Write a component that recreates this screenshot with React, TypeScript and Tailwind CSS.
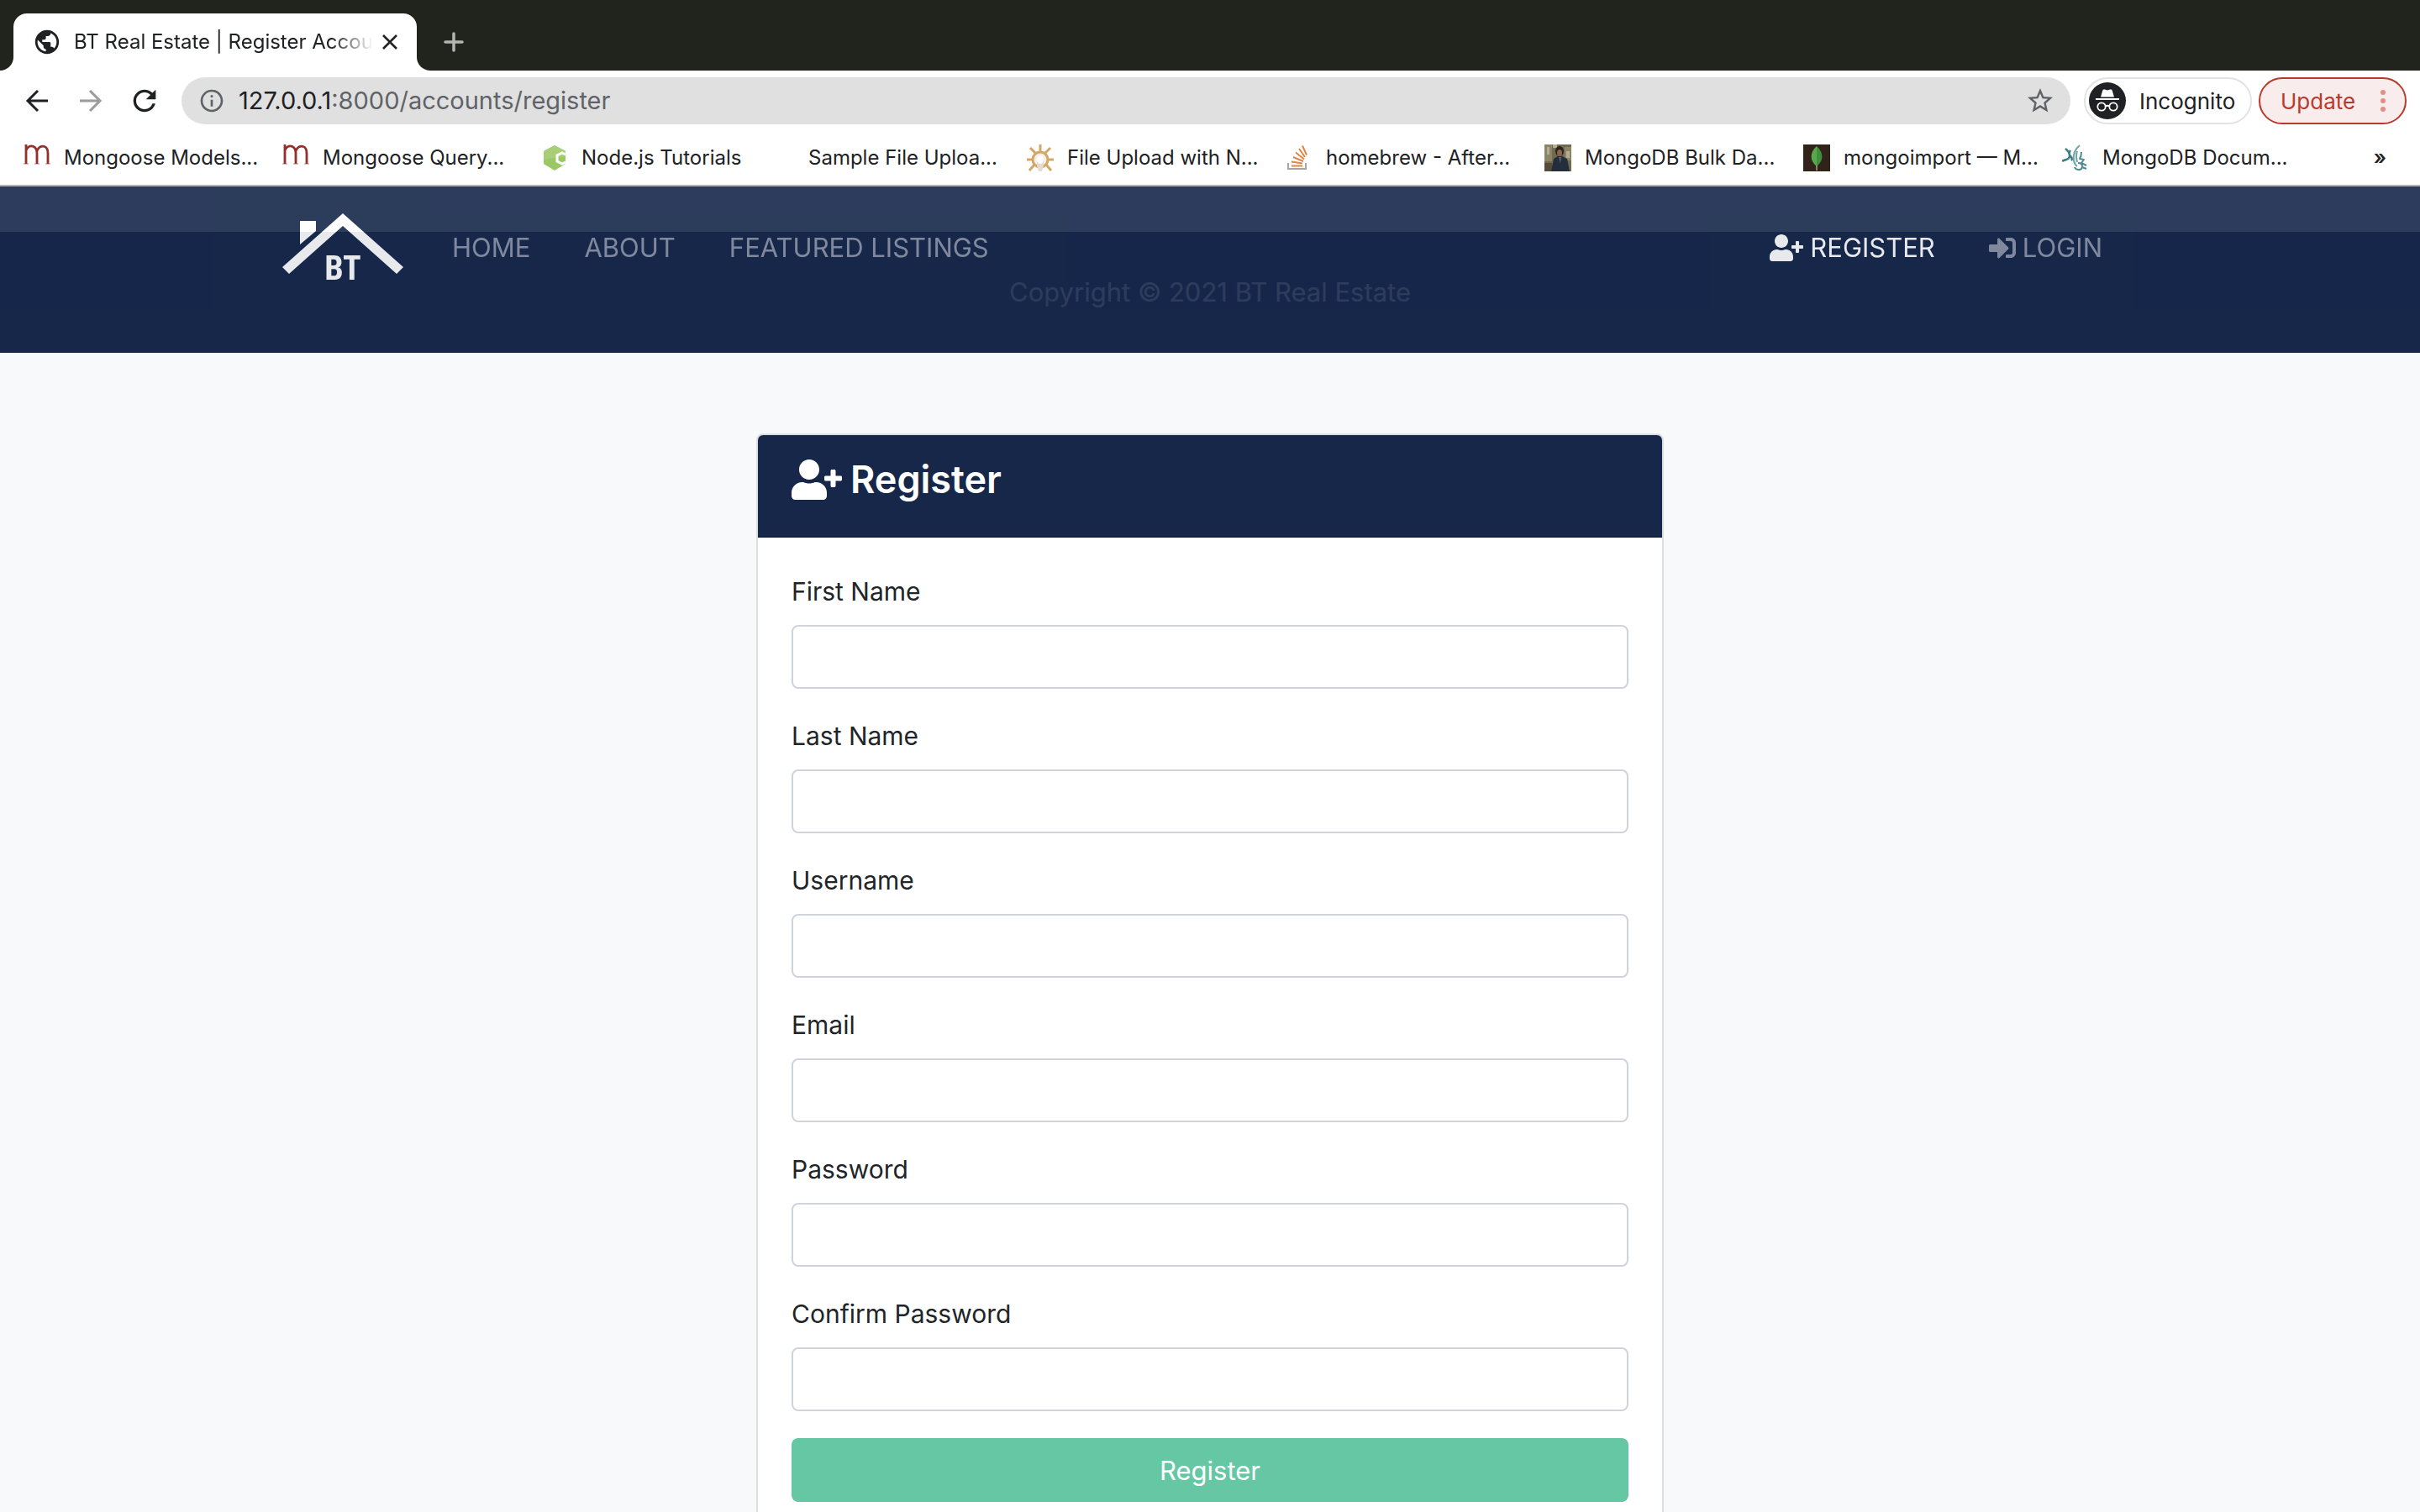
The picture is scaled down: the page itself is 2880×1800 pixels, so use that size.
import React from "react";
import { FaUserPlus, FaSignInAlt } from "react-icons/fa";
import { MdRefresh, MdStarBorder, MdInfoOutline, MdPublic } from "react-icons/md";

function MongooseIcon() {
  return (
    <svg viewBox="0 0 32 32" className="h-8 w-8" fill="none" stroke="#93302b" strokeWidth="2.8">
      <path d="M3 0v23M3 7c2-5 6-6 9-4.500 3 1.500 4 4 4 8v12.500M16 8c1-4 5-7 9-5.500 3 1 4 4 4 8v12.500" />
      <path d="M0 23h6M13 23h6M26 23h6" strokeWidth="1" opacity=".6" />
    </svg>
  );
}

function NodeIcon() {
  return (
    <svg viewBox="0 0 32 32" className="h-8 w-8">
      <path d="M16 1L29 8v15L16 31 3 23V8z" fill="#9bc765" />
      <path d="M16 1L29 8v6L3 18V8z" fill="#a8cf78" />
      <path d="M29 12l-4-2-6 3v7l6 3 4-2" fill="none" stroke="#fff" strokeWidth="3" />
    </svg>
  );
}

function BulbIcon() {
  return (
    <svg viewBox="0 0 32 32" className="h-8 w-8" fill="none">
      <path
        d="M16 0v8M0 18h7M25 18h7M4 4l6 6M28 4l-6 6M3 31l6-7M29 31l-6-7"
        stroke="#d3a768"
        strokeWidth="3"
      />
      <circle cx="16" cy="18" r="9" fill="#f4efe8" stroke="#d3a768" strokeWidth="3" />
      <path d="M12 17h8v8l-2 7h-4l-2-7z" fill="#e2dcd2" />
      <ellipse cx="16" cy="18" rx="4" ry="5" fill="#fff" />
    </svg>
  );
}

function StackIcon() {
  return (
    <svg viewBox="0 0 32 32" className="h-8 w-8" fill="none">
      <path d="M3 22v7h21v-7" stroke="#a5a5a8" strokeWidth="2" />
      <path
        d="M7 25.500h13M7 20.500l13 2M9 15l12 5M12 9.500l10 8M16 5l7 10M20 1.500l5 11"
        stroke="#e58442"
        strokeWidth="2"
      />
    </svg>
  );
}

function PhotoIcon() {
  return (
    <svg viewBox="0 0 32 32" className="h-8 w-8">
      <rect width="32" height="32" fill="#6f6a50" />
      <path d="M0 0h9v20H0zM24 3h8v16h-8z" fill="#8b8467" />
      <path d="M3 3h3v9H3zM26 8h4v8h-4zM10 0h5v4h-5z" fill="#b3ad93" />
      <path d="M0 22h9v10H0z" fill="#564a38" />
      <ellipse cx="18" cy="8" rx="5" ry="6" fill="#2c221c" />
      <ellipse cx="18" cy="10" rx="3" ry="4" fill="#8c6450" />
      <path d="M11 17l5-3h5l6 3 3 15H8z" fill="#242d3b" />
      <path d="M17 15h3l-1 8z" fill="#59626f" />
    </svg>
  );
}

function LeafIcon() {
  return (
    <svg viewBox="0 0 32 32" className="h-8 w-8">
      <rect width="32" height="32" fill="#32231a" />
      <path d="M16 2c-9 8-8 18 0 24z" fill="#58a84d" />
      <path d="M16 2c9 8 8 18 0 24z" fill="#3f8f3c" />
      <path d="M16 25v6" stroke="#a9a08f" strokeWidth="1.500" />
    </svg>
  );
}

function AntlerIcon() {
  return (
    <svg viewBox="0 0 32 32" className="h-8 w-8" fill="none" strokeLinejoin="round">
      <path d="M4 5q5 4 5 8t-4 5-5 2M10 7q-3 4 0 7t1 5" stroke="#3f7d85" strokeWidth="2.500" />
      <path d="M21 1c-6 5-8 12-7 18q1 5 4 7M18 8q-2 6 0 13" stroke="#6fa3a9" strokeWidth="2" />
      <path d="M23 9q0 5-2 8l5 1-3 4 6 3M19 22q5 0 5 4t-4 4-5-3M24 27l5 2" stroke="#4f8a91" strokeWidth="2" />
    </svg>
  );
}

function IncognitoIcon() {
  return (
    <svg viewBox="0 0 44 44" className="h-11 w-11 shrink-0">
      <circle cx="22" cy="22" r="22" fill="#202124" />
      <path d="M17.500 8.500h1.500l3 1 3-1h1.500q1 0 1.300 1.500l2.200 7.500H14l2.200-7.500q.3-1.500 1.300-1.500z" fill="#fff" />
      <rect x="8" y="19" width="28" height="2" fill="#fff" />
      <g fill="none" stroke="#fff" strokeWidth="1.800">
        <circle cx="15" cy="29" r="4.700" />
        <circle cx="29" cy="29" r="4.700" />
        <path d="M19.700 28.500q2.300-1.500 4.600 0" />
      </g>
    </svg>
  );
}

function Logo() {
  return (
    <svg viewBox="0 0 144 96" className="h-24 w-36" fill="#fff" role="img" aria-label="BT">
      <path d="M72 0L144 64l-8 8L72 15 8 72 0 64z" />
      <path d="M21 9h19v12L21 37z" />
      <text
        x="72"
        y="79"
        textAnchor="middle"
        fontSize="40"
        fontWeight="700"
        fontFamily="'Roboto Condensed', 'Liberation Sans Narrow', Roboto, sans-serif"
      >
        BT
      </text>
    </svg>
  );
}

const bookmarks = [
  { label: "Mongoose Models...", icon: <MongooseIcon />, width: "w-[308px]" },
  { label: "Mongoose Query...", icon: <MongooseIcon />, width: "w-[308px]" },
  { label: "Node.js Tutorials", icon: <NodeIcon />, width: "w-[270px]" },
  { label: "Sample File Uploa...", icon: null, width: "w-[308px]" },
  { label: "File Upload with N...", icon: <BulbIcon />, width: "w-[308px]" },
  { label: "homebrew - After...", icon: <StackIcon />, width: "w-[308px]" },
  { label: "MongoDB Bulk Da...", icon: <PhotoIcon />, width: "w-[308px]" },
  { label: "mongoimport — M...", icon: <LeafIcon />, width: "w-[308px]" },
  { label: "MongoDB Docum...", icon: <AntlerIcon />, width: "w-[308px]" },
];

function BrowserChrome() {
  return (
    <div className="shrink-0 border-b-2 border-[#b1b1b1] bg-white text-[#202124]">
      <div className="flex h-[84px] items-end bg-[#20241d]">
        <div className="h-4 w-4 bg-white">
          <div className="h-4 w-4 rounded-br-2xl bg-[#20241d]" />
        </div>
        <div className="flex h-[68px] w-[480px] items-center rounded-t-2xl bg-white pr-5 pl-[23px]">
          <MdPublic className="h-[34px] w-[34px] shrink-0" />
          <span className="ml-[15px] flex-1 text-[24px] leading-8 whitespace-nowrap [mask-image:linear-gradient(to_right,black_86%,transparent)]">
            BT Real Estate | Register Accou
          </span>
          <button aria-label="Close tab" className="ml-2">
            <svg viewBox="0 0 24 24" className="h-6 w-6" stroke="currentColor" strokeWidth="2.500">
              <path d="M4 4l16 16M20 4L4 20" />
            </svg>
          </button>
        </div>
        <div className="h-4 w-4 bg-white">
          <div className="h-4 w-4 rounded-bl-2xl bg-[#20241d]" />
        </div>
        <button aria-label="New tab" className="mb-[22px] ml-4 text-[#b4b5b3]">
          <svg viewBox="0 0 24 24" className="h-6 w-6" stroke="currentColor" strokeWidth="3.500" strokeLinecap="round">
            <path d="M12 2v20M2 12h20" />
          </svg>
        </button>
      </div>

      <div className="flex h-[72px] items-center pr-4 pl-7">
        <button aria-label="Back">
          <svg viewBox="0 0 32 32" className="h-8 w-8" fill="none" stroke="currentColor" strokeWidth="3">
            <path d="M29 16H5M17 4L5 16l12 12" />
          </svg>
        </button>
        <button aria-label="Forward" className="ml-8 text-[#9a9b9c]">
          <svg viewBox="0 0 32 32" className="h-8 w-8" fill="none" stroke="currentColor" strokeWidth="3">
            <path d="M3 16h24M15 4l12 12-12 12" />
          </svg>
        </button>
        <button aria-label="Reload" className="ml-7">
          <MdRefresh className="h-10 w-10" />
        </button>
        <div className="ml-6 flex h-14 flex-1 items-center rounded-full bg-[#e0e0e0] pr-[18px] pl-5 text-[#5f6368]">
          <MdInfoOutline className="h-8 w-8 shrink-0" />
          <div role="textbox" aria-label="Address" className="ml-4 flex-1 text-[29px] leading-8">
            <span className="text-[#202124]">127.0.0.1</span>:8000/accounts/register
          </div>
          <button aria-label="Bookmark this page">
            <MdStarBorder className="h-9 w-9" />
          </button>
        </div>
        <button className="ml-4 flex h-14 w-[200px] items-center rounded-full border-2 border-[#e2e2e2] pl-1 text-[26px]">
          <IncognitoIcon />
          <span className="ml-4">Incognito</span>
        </button>
        <button className="ml-2 flex h-14 w-44 items-center rounded-full border-2 border-[#b93a2d] bg-[#f9ecec] pl-6 text-[26px] text-[#b93a2d]">
          Update
          <svg viewBox="0 0 8 28" className="ml-auto mr-[22px] h-7 w-2" fill="#e58d84">
            <circle cx="4" cy="4" r="3" />
            <circle cx="4" cy="14" r="3" />
            <circle cx="4" cy="24" r="3" />
          </svg>
        </button>
      </div>

      <div className="flex h-16 items-center pr-10 pl-7 text-[24px] leading-8">
        {bookmarks.map((b) => (
          <a key={b.label} href="#" className={`flex shrink-0 items-center whitespace-nowrap ${b.width}`}>
            <span className="mr-4 h-8 w-8">{b.icon}</span>
            {b.label}
          </a>
        ))}
        <button aria-label="More bookmarks" className="ml-auto font-semibold">»</button>
      </div>
    </div>
  );
}

function SiteHeader() {
  return (
    <header className="relative text-[31px] leading-[48px]">
      <div className="h-[54px] bg-white" />
      <div className="bg-[#16274a] py-12 text-center text-white">Copyright © 2021 BT Real Estate</div>
      <nav className="absolute inset-x-0 top-0 bg-[#16274a] opacity-90">
        <div className="mx-auto flex h-[146px] max-w-[2280px] items-center pr-[38px] pl-9 text-white">
          <a href="#" className="mt-8 self-start">
            <Logo />
          </a>
          <div className="ml-[58px] flex gap-16 text-white/50">
            <a href="#">HOME</a>
            <a href="#">ABOUT</a>
            <a href="#">FEATURED LISTINGS</a>
          </div>
          <div className="ml-auto flex gap-16 pr-10">
            <a href="#" className="flex items-center gap-2">
              <FaUserPlus className="h-8 w-10" />
              REGISTER
            </a>
            <a href="#" className="flex items-center gap-2 text-white/50">
              <FaSignInAlt className="h-8 w-8" />
              LOGIN
            </a>
          </div>
        </div>
      </nav>
    </header>
  );
}

const fields = [
  { id: "first_name", label: "First Name", type: "text" },
  { id: "last_name", label: "Last Name", type: "text" },
  { id: "username", label: "Username", type: "text" },
  { id: "email", label: "Email", type: "email" },
  { id: "password", label: "Password", type: "password" },
  { id: "password2", label: "Confirm Password", type: "password" },
];

function RegisterCard() {
  return (
    <section className="mx-auto mt-24 w-full max-w-[1080px] overflow-hidden rounded-lg border-2 border-[#dcdee0] bg-white">
      <div className="border-b-2 border-[#122142] bg-[#16274a] px-10 pt-6 pb-[38px] text-white">
        <h1 className="flex items-center gap-2.5 text-[45px] leading-[58px] font-semibold">
          <FaUserPlus className="h-12 w-[60px]" />
          Register
        </h1>
      </div>
      <form className="p-10" onSubmit={(e) => e.preventDefault()}>
        {fields.map((f) => (
          <div key={f.id} className="mb-8">
            <label htmlFor={f.id} className="mb-4 block">
              {f.label}
            </label>
            <input
              id={f.id}
              name={f.id}
              type={f.type}
              className="block h-[76px] w-full rounded-lg border-2 border-[#ced4da] bg-white px-6"
            />
          </div>
        ))}
        <button type="submit" className="block h-[76px] w-full rounded-lg bg-[#65c7a4] pt-0.5 text-[31px] text-white">
          Register
        </button>
      </form>
    </section>
  );
}

export default function App() {
  return (
    <div className="flex h-screen flex-col overflow-hidden bg-[#f7f9fb] font-['Inter','Liberation_Sans',sans-serif]">
      <BrowserChrome />
      <div className="min-h-0 flex-1 overflow-hidden">
        <SiteHeader />
        <main className="text-[30px] leading-[48px] text-[#212529]">
          <RegisterCard />
        </main>
      </div>
    </div>
  );
}
